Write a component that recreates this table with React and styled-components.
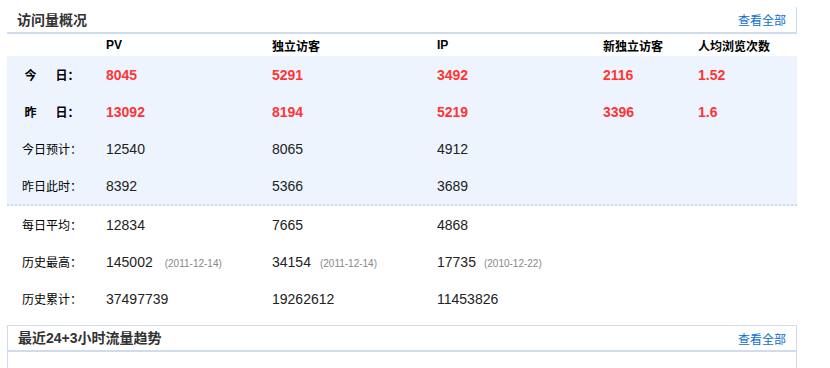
import React from 'react'
import styled, { createGlobalStyle } from 'styled-components'

const Global = createGlobalStyle`
  body {
    margin: 0;
    background: #fff;
    font-family: "Liberation Sans", Arial, "Noto Sans CJK SC", sans-serif;
    font-size: 12px;
    color: #000;
  }
`

const line = '#cfdcec'

const Wrap = styled.div`
  width: 790px;
  padding: 7px 0 0 7px;
`

const Head = styled.div`
  display: flex;
  align-items: center;
  justify-content: space-between;
  box-sizing: border-box;
  height: ${(p) => (p.$boxed ? '26px' : '27px')};
  padding: 0 10px;
  border-bottom: 2px solid ${line};
  border-right: 1px solid ${line};
`

const Title = styled.h2`
  margin: 0;
  font-size: 14px;
  font-weight: bold;
  color: #333;
  line-height: 1;
`

const More = styled.a`
  font-size: 12px;
  color: #0a6fcf;
  text-decoration: none;
  cursor: pointer;
`

const Table = styled.div`
  display: flex;
  flex-direction: column;
`

const Row = styled.div`
  display: grid;
  grid-template-columns: 99px 166px 165px 166px 95px 1fr;
  align-items: center;
  height: ${(p) => (p.$head ? '22px' : '37px')};
`

const Shaded = styled.div`
  background: #edf4fe;
  border-bottom: 2px dotted #c9d7e9;
`

const Plain = styled.div`
  margin-bottom: 8px;
`

const ColHead = styled.span`
  font-weight: bold;
  font-size: 12px;
  color: #000;
`

const Label = styled.span`
  width: 90px;
  text-align: center;
  font-size: 12px;
  font-weight: ${(p) => (p.$strong ? 'bold' : 'normal')};
  color: #000;
`

const Gap = styled.span`
  display: inline-block;
  width: 19px;
`

const Value = styled.span`
  font-size: 14px;
  font-weight: ${(p) => (p.$hot ? 'bold' : 'normal')};
  color: ${(p) => (p.$hot ? '#ff3535' : '#222')};
  white-space: nowrap;
`

const Date = styled.span`
  font-size: 10px;
  font-weight: normal;
  color: #888;
  margin-left: ${(p) => p.$gap}px;
`

const Panel = styled.div`
  border: 1px solid ${line};
  border-bottom: none;
  height: 42px;
`

const PanelHead = styled(Head)`
  border-right: none;
`

const heads = ['PV', '独立访客', 'IP', '新独立访客', '人均浏览次数']

const hotRows = [
  { a: '今', b: '日：', vals: ['8045', '5291', '3492', '2116', '1.52'] },
  { a: '昨', b: '日：', vals: ['13092', '8194', '5219', '3396', '1.6'] },
]

const shadedRows = [
  { label: '今日预计：', vals: ['12540', '8065', '4912'] },
  { label: '昨日此时：', vals: ['8392', '5366', '3689'] },
]

const plainRows = [
  { label: '每日平均：', vals: [['12834'], ['7665'], ['4868']] },
  {
    label: '历史最高：',
    vals: [
      ['145002', '(2011-12-14)', 12],
      ['34154', '(2011-12-14)', 9],
      ['17735', '(2010-12-22)', 8],
    ],
  },
  { label: '历史累计：', vals: [['37497739'], ['19262612'], ['11453826']] },
]

export default function App() {
  return (
    <Wrap>
      <Global />
      <Head>
        <Title>访问量概况</Title>
        <More>查看全部</More>
      </Head>
      <Table>
        <Row $head>
          <span />
          {heads.map((h) => (
            <ColHead key={h}>{h}</ColHead>
          ))}
        </Row>
        <Shaded>
          {hotRows.map((r) => (
            <Row key={r.a}>
              <Label $strong>
                {r.a}
                <Gap />
                {r.b}
              </Label>
              {r.vals.map((v, i) => (
                <Value $hot key={i}>
                  {v}
                </Value>
              ))}
            </Row>
          ))}
          {shadedRows.map((r) => (
            <Row key={r.label}>
              <Label>{r.label}</Label>
              {r.vals.map((v, i) => (
                <Value key={i}>{v}</Value>
              ))}
            </Row>
          ))}
        </Shaded>
        <Plain>
          {plainRows.map((r) => (
            <Row key={r.label}>
              <Label>{r.label}</Label>
              {r.vals.map(([v, d, g], i) => (
                <Value key={i}>
                  {v}
                  {d && <Date $gap={g}>{d}</Date>}
                </Value>
              ))}
            </Row>
          ))}
        </Plain>
      </Table>
      <Panel>
        <PanelHead $boxed>
          <Title>最近24+3小时流量趋势</Title>
          <More>查看全部</More>
        </PanelHead>
      </Panel>
    </Wrap>
  )
}
